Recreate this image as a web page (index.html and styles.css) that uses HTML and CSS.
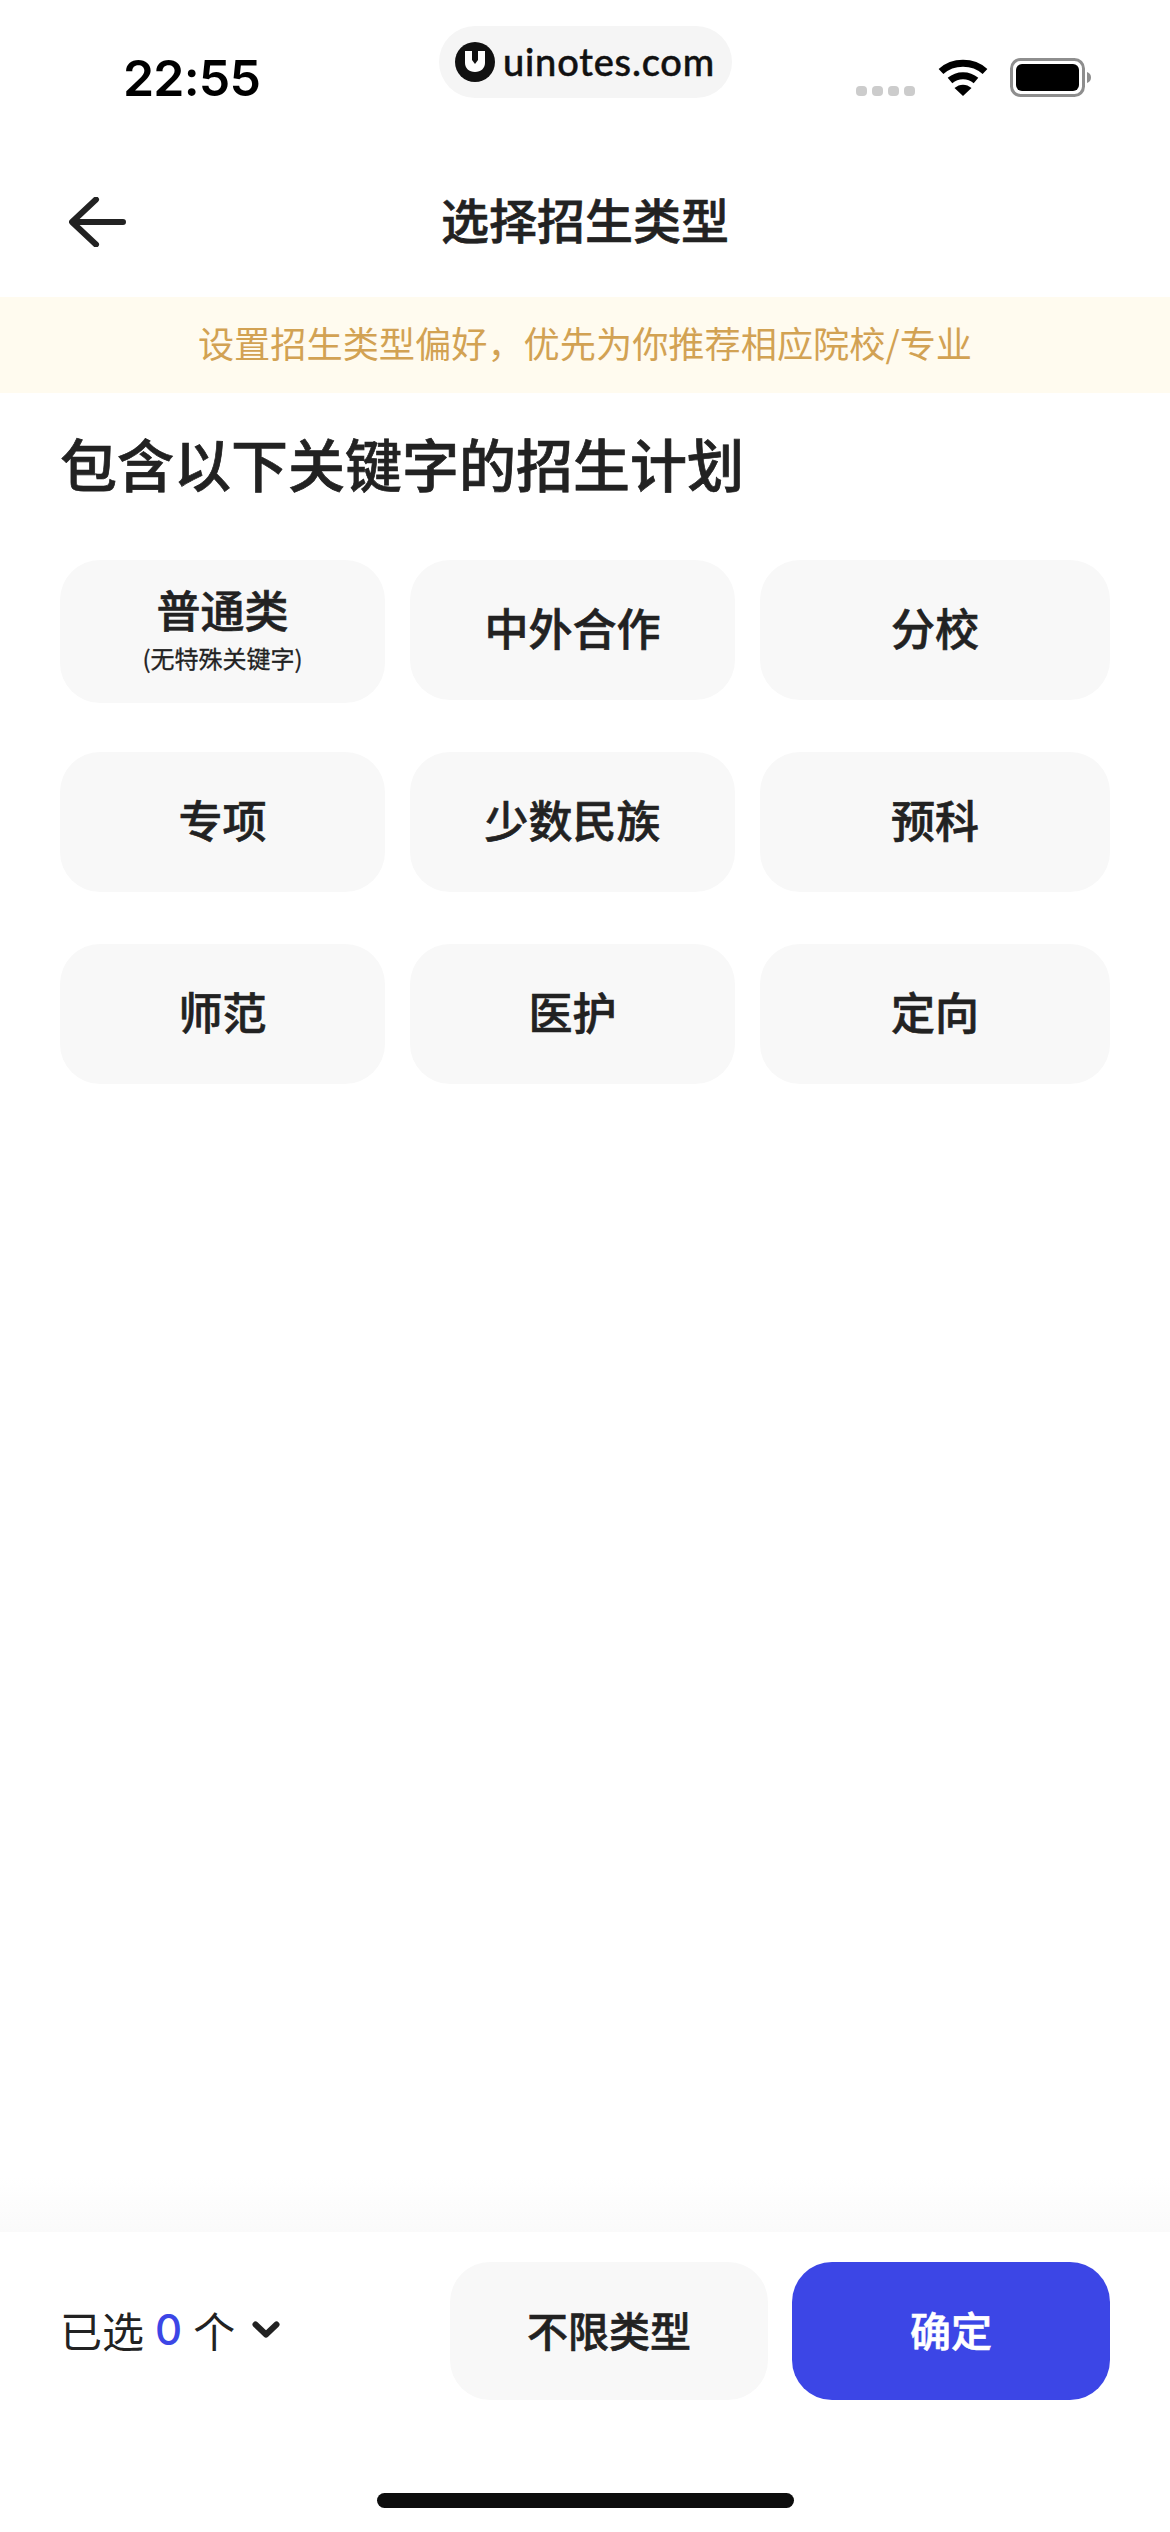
FILE: index.html
```html
<!DOCTYPE html>
<html lang="zh-CN">
<head>
    <meta charset="UTF-8">
    <meta name="viewport" content="width=device-width, initial-scale=1.0">
    <title>选择招生类型</title>
    <link rel="stylesheet" href="styles.css">
</head>
<body>
    <div class="page">
        <div class="status-bar">
            <div class="time">22:55</div>
            <div class="brand">
                <svg class="brand-logo" viewBox="0 0 40 40">
                    <circle cx="20" cy="20" r="20" fill="#111"/>
                    <path d="M10 9h7v9l3 4 3-4V9h7v12c0 5-4 9-10 9s-10-4-10-9z" fill="#fff"/>
                </svg>
                <span class="brand-name">uinotes.com</span>
            </div>
            <div class="status-icons">
                <div class="signal"><i></i><i></i><i></i><i></i></div>
                <svg class="wifi" viewBox="0 0 50 38">
                    <path d="M3 13.500c12-11 32-11 44 0" fill="none" stroke="#000" stroke-width="7"/>
                    <path d="M12 22.500c7.500-6.500 18.500-6.500 26 0" fill="none" stroke="#000" stroke-width="7"/>
                    <path d="M16.500 30c5-4.500 12-4.500 17 0l-8.500 8z" fill="#000"/>
                </svg>
                <svg class="battery" viewBox="0 0 82 39">
                    <rect x="1.500" y="1.500" width="72" height="36" rx="9" fill="#fff" stroke="#8e8e8e" stroke-width="3"/>
                    <rect x="6" y="6" width="63" height="27" rx="6" fill="#000"/>
                    <path d="M77 14c3 1 4 3 4 5.500s-1 4.500-4 5.500z" fill="#8e8e8e"/>
                </svg>
            </div>
        </div>

        <div class="nav-bar">
            <svg class="back-icon" viewBox="0 0 57 50">
                <path d="M54 25H4M27 2.500L3 25l24 22.500" fill="none" stroke="#222" stroke-width="6" stroke-linecap="round" stroke-linejoin="round"/>
            </svg>
            <h1 class="nav-title">选择招生类型</h1>
        </div>

        <div class="notice">设置招生类型偏好，优先为你推荐相应院校/专业</div>

        <h2 class="section-title">包含以下关键字的招生计划</h2>

        <div class="type-grid">
            <div class="type-card type-card-tall">
                <span>普通类</span>
                <small>(无特殊关键字)</small>
            </div>
            <div class="type-card"><span>中外合作</span></div>
            <div class="type-card"><span>分校</span></div>
            <div class="type-card"><span>专项</span></div>
            <div class="type-card"><span>少数民族</span></div>
            <div class="type-card"><span>预科</span></div>
            <div class="type-card"><span>师范</span></div>
            <div class="type-card"><span>医护</span></div>
            <div class="type-card"><span>定向</span></div>
        </div>

        <div class="fade"></div>

        <div class="footer">
            <div class="footer-row">
                <div class="selected">
                    <span>已选</span>
                    <b>0</b>
                    <span>个</span>
                    <svg class="chevron" viewBox="0 0 28 17">
                        <path d="M3.500 3.500L14 13.500 24.500 3.500" fill="none" stroke="#222" stroke-width="6" stroke-linecap="round" stroke-linejoin="round"/>
                    </svg>
                </div>
                <button class="btn btn-plain" type="button">不限类型</button>
                <button class="btn btn-primary" type="button">确定</button>
            </div>
            <div class="home-bar"></div>
        </div>
    </div>
</body>
</html>
```

FILE: styles.css
```css
* {
    box-sizing: border-box;
}
body {
    margin: 0;
    background-color: #fff;
    color: #222;
    font-family: "Noto Sans CJK SC", "Noto Sans", sans-serif;
}
.page {
    display: flex;
    flex-direction: column;
    width: 1170px;
    height: 2532px;
    overflow: hidden;
}

/* status bar */
.status-bar {
    display: flex;
    height: 147px;
    padding-left: 123px;
}
.time {
    width: 316px;
    padding-top: 47px;
    color: #000;
    font-family: Inter, sans-serif;
    font-size: 50px;
    font-weight: 600;
    letter-spacing: -0.8px;
    line-height: 62px;
}
.brand {
    display: flex;
    align-items: center;
    gap: 8px;
    width: 293px;
    height: 72px;
    margin-top: 26px;
    padding-left: 16px;
    border-radius: 36px;
    background-color: #f5f5f5;
}
.brand-logo {
    width: 40px;
    height: 40px;
}
.brand-name {
    margin-bottom: 3px;
    color: #111;
    font-family: Lato, sans-serif;
    font-size: 38px;
    font-weight: 500;
    letter-spacing: 0.8px;
    -webkit-text-stroke: 0.5px #111;
}
.status-icons {
    display: flex;
    align-items: flex-start;
    margin-left: 124px;
    padding-top: 58px;
}
.signal {
    display: flex;
    gap: 5px;
    margin-top: 28px;
    margin-right: 23px;
}
.signal i {
    width: 11px;
    height: 10px;
    border-radius: 4px;
    background-color: #ccc;
}
.wifi {
    width: 50px;
    height: 38px;
    margin-right: 22px;
}
.battery {
    width: 82px;
    height: 39px;
}

/* nav */
.nav-bar {
    position: relative;
    display: flex;
    align-items: center;
    justify-content: center;
    height: 150px;
    padding-bottom: 8px;
}
.back-icon {
    position: absolute;
    left: 69px;
    top: 50px;
    width: 57px;
    height: 50px;
}
.nav-title {
    margin: 0;
    font-size: 48px;
    font-weight: 500;
    line-height: 60px;
    -webkit-text-stroke: 0.6px #222;
}

.notice {
    height: 96px;
    padding-bottom: 6px;
    background-color: #fffbef;
    color: #d2a253;
    font-size: 36.2px;
    line-height: 90px;
    text-align: center;
}
.section-title {
    margin: 29px 0 0 60px;
    font-size: 57px;
    font-weight: 500;
    line-height: 80px;
    -webkit-text-stroke: 0.7px #222;
}

/* type cards */
.type-grid {
    display: grid;
    grid-template-columns: 325px 325px 350px;
    grid-auto-rows: 140px;
    gap: 52px 25px;
    margin: 58px 0 0 60px;
}
.type-card {
    display: flex;
    flex-direction: column;
    align-items: center;
    justify-content: center;
    height: 140px;
    padding-bottom: 6px;
    border-radius: 40px;
    background-color: #f8f8f8;
    font-size: 44px;
    font-weight: 500;
    line-height: 56px;
    -webkit-text-stroke: 0.6px #222;
}
.type-card-tall {
    gap: 9px;
    height: 143px;
    padding-bottom: 7px;
    line-height: 50px;
}
.type-card small {
    font-size: 24px;
    font-weight: 400;
    line-height: 30px;
    -webkit-text-stroke: 0.3px #222;
}

/* footer */
.fade {
    height: 55px;
    margin-top: auto;
    background: linear-gradient(#fff, #fafafa);
}
.footer {
    height: 300px;
    padding-top: 30px;
}
.footer-row {
    display: flex;
    align-items: center;
    padding: 0 60px;
}
.selected {
    display: flex;
    align-items: center;
    gap: 11px;
    flex: 1;
    padding-bottom: 3px;
    font-size: 42px;
}
.selected b {
    color: #3c46e6;
    font-family: Inter, sans-serif;
    font-size: 42px;
    font-weight: 500;
}
.chevron {
    width: 28px;
    height: 17px;
    margin-left: 6px;
}
.btn {
    height: 138px;
    padding: 0 0 4px;
    border: none;
    border-radius: 40px;
    font-family: inherit;
    font-size: 41px;
    font-weight: 500;
    -webkit-text-stroke: 0.6px currentColor;
}
.btn-plain {
    width: 318px;
    margin-right: 24px;
    background-color: #f8f8f8;
    color: #222;
}
.btn-primary {
    width: 318px;
    background-color: #3c46e6;
    color: #fff;
}
.home-bar {
    width: 417px;
    height: 15px;
    margin: 93px auto 0;
    border-radius: 8px;
    background-color: #0d0d0d;
}
```
